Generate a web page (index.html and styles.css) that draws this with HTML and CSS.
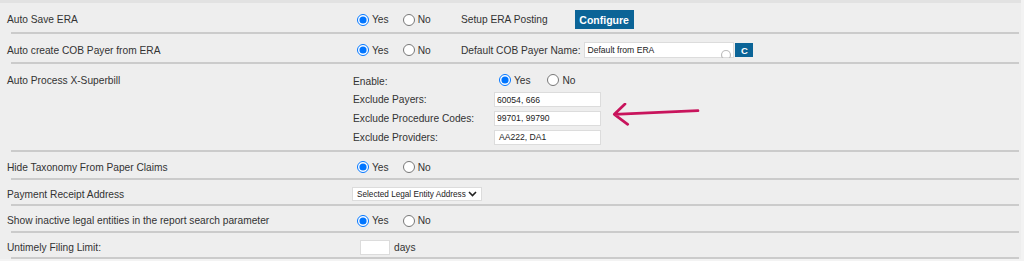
FILE: index.html
```html
<!DOCTYPE html>
<html>
<head>
    <meta charset="UTF-8">
    <title>Billing Settings</title>
    <link rel="stylesheet" href="styles.css">
</head>
<body>
    <div class="page">
        <div class="row row-1">
            <div class="label">Auto Save ERA</div>
            <div class="ctrl">
                <div class="radios">
                    <label class="opt"><input type="radio" name="r1" checked>Yes</label>
                    <label class="opt"><input type="radio" name="r1">No</label>
                </div>
                <span>Setup ERA Posting</span>
                <button class="btn btn-config">Configure</button>
            </div>
        </div>

        <div class="row row-2">
            <div class="label">Auto create COB Payer from ERA</div>
            <div class="ctrl">
                <div class="radios">
                    <label class="opt"><input type="radio" name="r2" checked>Yes</label>
                    <label class="opt"><input type="radio" name="r2">No</label>
                </div>
                <span>Default COB Payer Name:</span>
                <div class="search-box">
                    <input type="text" class="field field-cob" value="Default from ERA">
                    <svg class="spinner" width="12" height="10" viewBox="0 0 12 10"><circle cx="6" cy="7" r="4.5" fill="none" stroke="#bdbdbd" stroke-width="1.2"/></svg>
                </div>
                <button class="btn btn-c">C</button>
            </div>
        </div>

        <div class="row row-3">
            <div class="label">Auto Process X-Superbill</div>
            <div class="sub-grid">
                <div>Enable:</div>
                <div>
                    <label class="opt"><input type="radio" name="r3" checked>Yes</label>
                    <label class="opt"><input type="radio" name="r3">No</label>
                </div>
                <div>Exclude Payers:</div>
                <div><input type="text" class="field field-small" value="60054, 666"></div>
                <div>Exclude Procedure Codes:</div>
                <div><input type="text" class="field field-small" value="99701, 99790"></div>
                <div>Exclude Providers:</div>
                <div><input type="text" class="field field-small" value=" AA222, DA1"></div>
            </div>
        </div>

        <div class="row row-4">
            <div class="label">Hide Taxonomy From Paper Claims</div>
            <div class="ctrl">
                <label class="opt"><input type="radio" name="r4" checked>Yes</label>
                <label class="opt"><input type="radio" name="r4">No</label>
            </div>
        </div>

        <div class="row row-5">
            <div class="label">Payment Receipt Address</div>
            <div class="ctrl">
                <div class="select">
                    <span>Selected Legal Entity Address</span>
                    <svg width="9" height="6" viewBox="0 0 9 6"><path d="M1 1l3.5 3.5L8 1" fill="none" stroke="#222" stroke-width="1.6"/></svg>
                </div>
            </div>
        </div>

        <div class="row row-6">
            <div class="label">Show inactive legal entities in the report search parameter</div>
            <div class="ctrl">
                <label class="opt"><input type="radio" name="r6" checked>Yes</label>
                <label class="opt"><input type="radio" name="r6">No</label>
            </div>
        </div>

        <div class="row row-7">
            <div class="label">Untimely Filing Limit:</div>
            <div class="ctrl">
                <input type="text" class="field field-days">
                <span>days</span>
            </div>
        </div>

        <!-- annotation arrow drawn over the form -->
        <svg class="arrow" width="100" height="32" viewBox="0 0 100 32">
            <path d="M98 7.7L14.3 11.3M25 1L14.3 11.3L27.7 21.3" fill="none" stroke="#c8145c" stroke-width="2.7" stroke-linecap="round" stroke-linejoin="round"/>
        </svg>
    </div>
</body>
</html>
```

FILE: styles.css
```css
body {
    margin: 0;
    background: #f3f3f3;
    font-family: "Liberation Sans", Arial, sans-serif;
    font-size: 10.2px;
    color: #333;
}
.page {
    position: relative;
    width: 1021px;
    background: #eeeeee;
    border-top: 3px solid #e2e2e2;
}
.row {
    display: grid;
    grid-template-columns: 345px 1fr;
    align-items: center;
    box-sizing: border-box;
    padding: 4px 0 2px 7px;
    background: linear-gradient(#cbcbcb, #cbcbcb) no-repeat 11px 100% / 1008px 2px;
}
.row-1 { height: 31px; }
.row-2 { height: 30px; }
.row-3 { height: 88px; align-items: start; padding-top: 8px; padding-bottom: 8px; }
.row-4 { height: 28px; }
.row-5 { height: 26px; }
.row-6 { height: 27px; }
.row-7 { height: 26px; }
.row-3 .label {
    padding-top: 3px;
}
.ctrl {
    display: flex;
    align-items: center;
}
.radios {
    display: flex;
    align-items: center;
    width: 109px;
}
.opt {
    display: inline-flex;
    align-items: center;
    margin-right: 9px;
}
.opt input {
    width: 12px;
    height: 12px;
    margin: 0 3px 0 5px;
}
.btn {
    border: none;
    background: #0b6497;
    color: white;
    font-family: "Liberation Sans", Arial, sans-serif;
    font-weight: bold;
    padding: 0;
    cursor: pointer;
}
.btn-config {
    width: 59px;
    height: 19px;
    margin-left: 27px;
    font-size: 10.5px;
}
.btn-c {
    width: 18px;
    height: 14px;
    margin-left: 3px;
    font-size: 9.5px;
}
.field {
    box-sizing: border-box;
    border: 1px solid #dcdcdc;
    background: white;
    font-family: "Liberation Sans", Arial, sans-serif;
    font-size: 8.6px;
    color: #222;
    padding: 0 2px;
    outline: none;
}
.search-box {
    display: flex;
    align-items: flex-end;
    margin-left: 4px;
}
.field-cob {
    width: 150px;
    height: 16px;
}
.spinner {
    margin-left: -14px;
    overflow: hidden;
}
.sub-grid {
    display: grid;
    grid-template-columns: 141px 108px;
    grid-auto-rows: 18.6px;
    align-items: center;
    padding-left: 1px;
}
.field-small {
    width: 107px;
    height: 15px;
    display: block;
}
.select {
    display: flex;
    align-items: center;
    justify-content: space-between;
    box-sizing: border-box;
    width: 130px;
    height: 14px;
    background: white;
    border: 1px solid #dcdcdc;
    padding: 0 4px;
    font-size: 8.2px;
    color: #222;
    white-space: nowrap;
}
.field-days {
    width: 30px;
    height: 15px;
    margin-left: 8px;
    margin-right: 4px;
}
.arrow {
    position: absolute;
    left: 600px;
    top: 100px;
}
```
